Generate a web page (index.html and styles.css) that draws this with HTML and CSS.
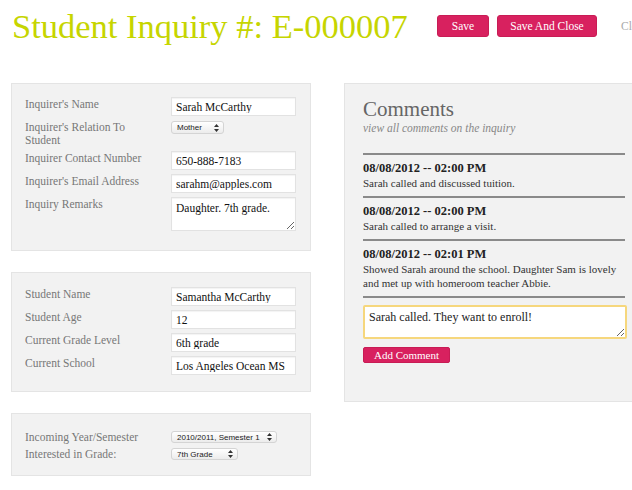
FILE: index.html
```html
<!DOCTYPE html>
<html>
<head>
<meta charset="utf-8">
<link rel="stylesheet" href="styles.css">
</head>
<body>
<header class="header">
  <h1 class="title">Student Inquiry #: E-000007</h1>
  <div class="actions">
    <button class="btn btn-save">Save</button>
    <button class="btn btn-close">Save And Close</button>
    <a class="close-link">Close</a>
  </div>
</header>
<main class="main">
  <div class="col-left">
    <section class="panel panel-inquirer">
      <div class="form-grid">
        <label class="lbl">Inquirer's Name</label>
        <input class="inp" type="text" value="Sarah McCarthy">
        <label class="lbl">Inquirer's Relation To Student</label>
        <div class="sel sel-mother"><span>Mother</span><svg class="arr" width="5" height="8" viewBox="0 0 5 8"><path d="M2.5 0 L5 3 H0 Z M2.5 8 L5 5 H0 Z" fill="#333"/></svg></div>
        <label class="lbl">Inquirer Contact Number</label>
        <input class="inp" type="text" value="650-888-7183">
        <label class="lbl">Inquirer's Email Address</label>
        <input class="inp" type="text" value="sarahm@apples.com">
        <label class="lbl">Inquiry Remarks</label>
        <textarea class="ta">Daughter. 7th grade.</textarea>
      </div>
    </section>
    <section class="panel panel-student">
      <div class="form-grid">
        <label class="lbl">Student Name</label>
        <input class="inp" type="text" value="Samantha McCarthy">
        <label class="lbl">Student Age</label>
        <input class="inp" type="text" value="12">
        <label class="lbl">Current Grade Level</label>
        <input class="inp" type="text" value="6th grade">
        <label class="lbl">Current School</label>
        <input class="inp" type="text" value="Los Angeles Ocean MS">
      </div>
    </section>
    <section class="panel panel-term">
      <div class="form-grid grid-term">
        <label class="lbl lbl-term">Incoming Year/Semester</label>
        <div class="sel sel-year"><span>2010/2011, Semester 1</span><svg class="arr" width="5" height="8" viewBox="0 0 5 8"><path d="M2.5 0 L5 3 H0 Z M2.5 8 L5 5 H0 Z" fill="#333"/></svg></div>
        <label class="lbl lbl-term">Interested in Grade:</label>
        <div class="sel sel-grade"><span>7th Grade</span><svg class="arr" width="5" height="8" viewBox="0 0 5 8"><path d="M2.5 0 L5 3 H0 Z M2.5 8 L5 5 H0 Z" fill="#333"/></svg></div>
      </div>
    </section>
  </div>
  <section class="panel panel-comments">
    <h2 class="c-title">Comments</h2>
    <p class="c-sub">view all comments on the inquiry</p>
    <div class="c-list">
      <div class="c-item">
        <div class="c-date">08/08/2012 -- 02:00 PM</div>
        <div class="c-text">Sarah called and discussed tuition.</div>
      </div>
      <div class="c-item">
        <div class="c-date">08/08/2012 -- 02:00 PM</div>
        <div class="c-text">Sarah called to arrange a visit.</div>
      </div>
      <div class="c-item">
        <div class="c-date">08/08/2012 -- 02:01 PM</div>
        <div class="c-text">Showed Sarah around the school. Daughter Sam is lovely and met up with homeroom teacher Abbie.</div>
      </div>
    </div>
    <div class="c-form">
      <textarea class="c-input">Sarah called. They want to enroll!</textarea>
      <button class="btn btn-add">Add Comment</button>
    </div>
  </section>
</main>
</body>
</html>
```
FILE: styles.css
```css
* { box-sizing: border-box; }
html, body { margin: 0; padding: 0; }
body {
  width: 632px;
  height: 490px;
  overflow: hidden;
  background: #fff;
  font-family: "Liberation Serif", serif;
  color: #333;
}
.header {
  height: 83px;
  display: flex;
  align-items: flex-start;
  padding: 5px 0 0 12px;
}
.title {
  margin: 0;
  width: 425px;
  flex: none;
  font-weight: normal;
  font-size: 34.5px;
  line-height: 42px;
  color: #c6d500;
  white-space: nowrap;
}
.actions {
  display: flex;
  align-items: center;
  gap: 8px;
  margin-top: 10px;
}
.btn {
  font-family: "Liberation Serif", serif;
  background: #d8215f;
  color: #fff;
  border: 1px solid #c81c55;
  border-radius: 3px;
  cursor: pointer;
  padding: 0;
}
.btn-save { width: 52px; height: 22px; font-size: 11.5px; }
.btn-close { width: 100px; height: 22px; font-size: 11.5px; }
.close-link {
  margin-left: 16px;
  font-size: 11.5px;
  color: #aaa;
}
.main {
  display: flex;
  align-items: flex-start;
  gap: 33px;
  padding-left: 11px;
}
.col-left {
  display: flex;
  flex-direction: column;
  gap: 21px;
  width: 300px;
  flex: none;
}
.panel {
  background: #f2f2f2;
  border: 1px solid #e4e4e4;
}
.panel-inquirer { padding: 13px 13px 19px 13px; }
.panel-student { padding: 14px 13px 16px 13px; }
.panel-term { padding: 17px 13px 15px 13px; }
.form-grid {
  display: grid;
  grid-template-columns: 146px 125px;
  row-gap: 4px;
  align-items: start;
}
.grid-term { row-gap: 5px; }
.lbl {
  font-size: 11.5px;
  line-height: 13px;
  padding-top: 1px;
  color: #777;
  padding-right: 14px;
}
.lbl-term { padding-top: 0; line-height: 12px; }
.inp, .ta {
  width: 125px;
  height: 19px;
  border: 1px solid #e2e2e2;
  background: #fff;
  font-family: "Liberation Serif", serif;
  font-size: 11.5px;
  color: #111;
  padding: 0 4px;
  margin: 0;
  outline: none;
  box-shadow: inset 0 1px 1px rgba(0,0,0,0.05);
}
.ta {
  height: 34px;
  padding: 3px 4px;
  resize: vertical;
  line-height: 14px;
}
.sel {
  display: flex;
  align-items: center;
  justify-content: space-between;
  height: 13px;
  margin-top: 1px;
  border: 1px solid #d4d4d4;
  border-radius: 3px;
  background: linear-gradient(#fff, #ececec);
  font-family: "Liberation Sans", sans-serif;
  font-size: 8px;
  color: #222;
  padding: 0 4px 0 5px;
}
.sel-mother { width: 53px; }
.sel-year { width: 106px; height: 12px; margin-top: 0; }
.sel-grade { width: 67px; height: 12px; margin-top: 0; }
.arr { flex: none; }
.panel-comments {
  width: 300px;
  flex: none;
  padding: 13px 18px 38px 18px;
}
.c-title {
  margin: 0;
  font-weight: normal;
  font-size: 21px;
  line-height: 24px;
  color: #666;
}
.c-sub {
  margin: 0;
  font-style: italic;
  font-size: 11.5px;
  line-height: 14px;
  color: #888;
}
.c-list { margin-top: 18px; }
.c-item {
  border-top: 2px solid #8a8a8a;
  padding: 6px 0 6px;
}
.c-date {
  font-weight: bold;
  font-size: 12.5px;
  line-height: 15px;
  color: #222;
}
.c-text {
  font-size: 11px;
  line-height: 14px;
  color: #333;
}
.c-form {
  border-top: 2px solid #8a8a8a;
  padding-top: 7px;
  display: flex;
  flex-direction: column;
  align-items: flex-start;
}
.c-input {
  width: 264px;
  height: 34px;
  border: 2px solid #f6d77d;
  border-radius: 2px;
  background: #fff;
  font-family: "Liberation Serif", serif;
  font-size: 12px;
  color: #222;
  padding: 3px 4px;
  margin: 0;
  resize: vertical;
  outline: none;
}
.btn-add {
  margin-top: 8px;
  width: 87px;
  height: 16px;
  font-size: 11px;
  border-radius: 2px;
}
```
